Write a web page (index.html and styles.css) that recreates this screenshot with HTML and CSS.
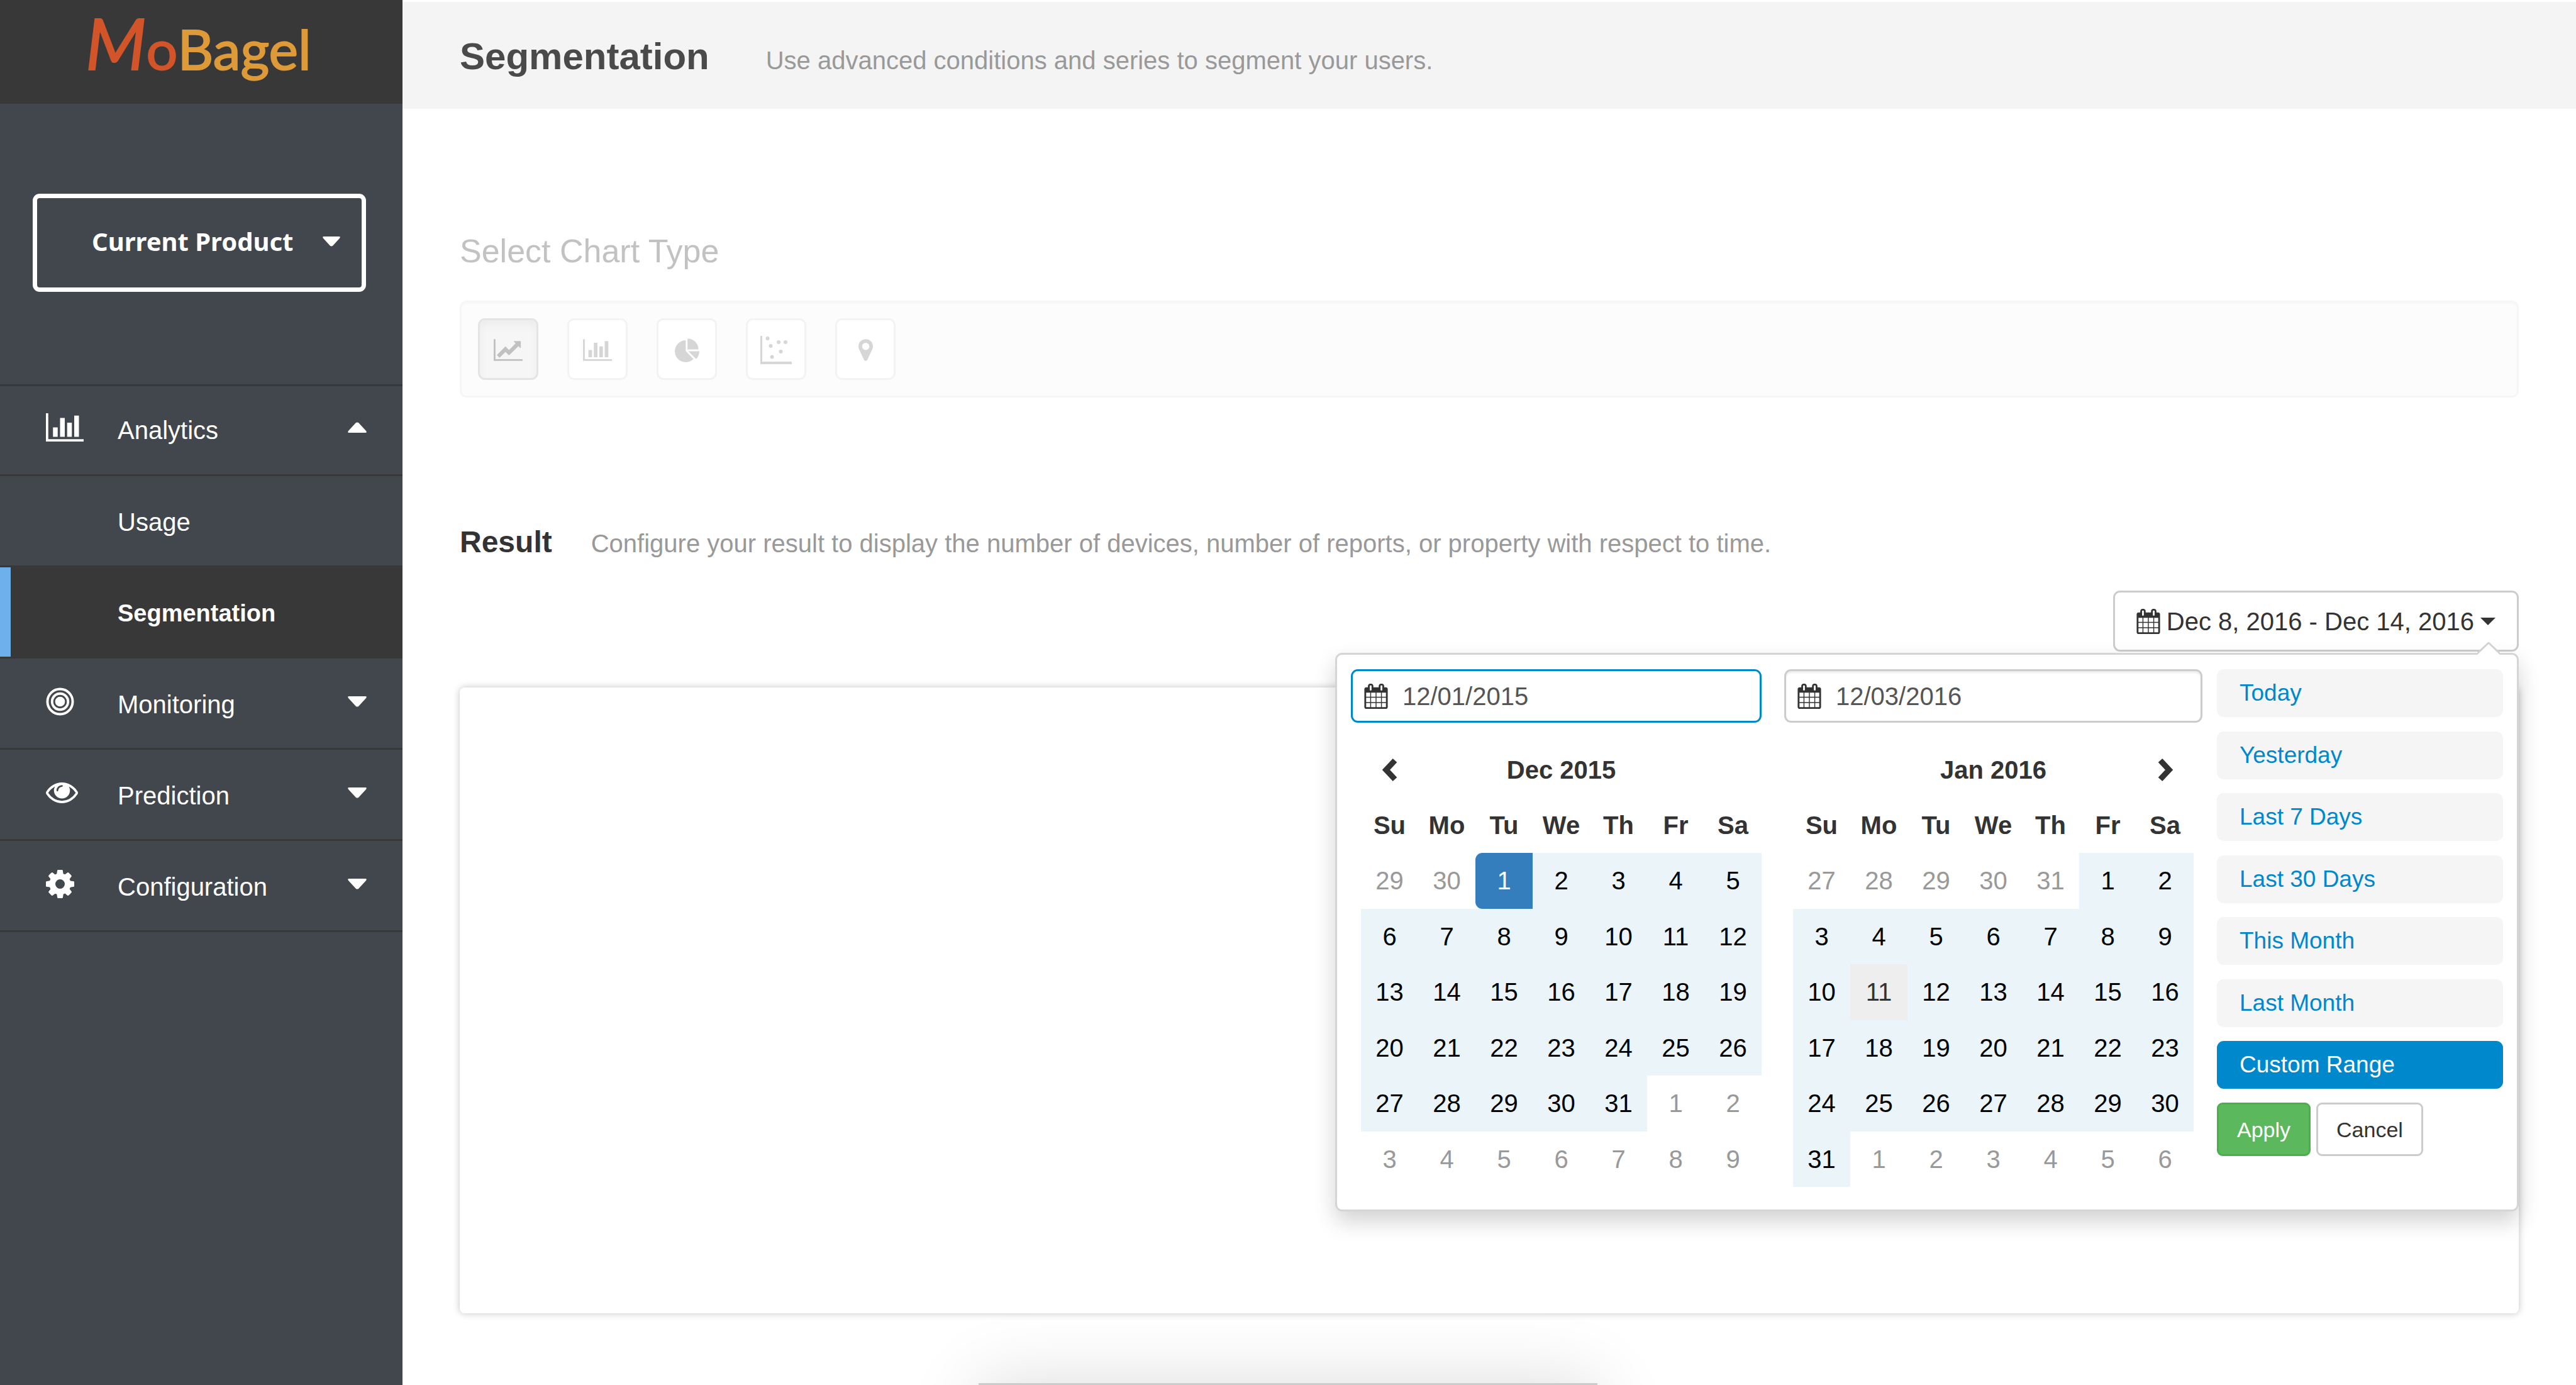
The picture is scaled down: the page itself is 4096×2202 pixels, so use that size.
FILE: index.html
```html
<!DOCTYPE html>
<html lang="en">
<head>
<meta charset="utf-8">
<title>Segmentation - MoBagel</title>
<link rel="stylesheet" href="styles.css">
</head>
<body>
<svg class="sprite" aria-hidden="true">
  <symbol id="i-bars" viewBox="0 128 2048 1536"><path d="M640 896v512h-256v-512h256zm384-512v1024h-256v-1024h256zm1024 1152v128h-2048v-1536h128v1408h1920zm-640-896v768h-256v-768h256zm384-384v1152h-256v-1152h256z"/></symbol>
  <symbol id="i-line" viewBox="0 128 2048 1536"><path d="M2048 1536v128h-2048v-1536h128v1408h1920zm-128-1248v435q0 21-19.5 29.5t-35.500-7.500l-121-121-633 633q-10 10-23 10t-23-10l-233-233-416 416-192-192 585-585q10-10 23-10t23 10l233 233 464-464-121-121q-16-16-7.500-35.500t29.500-19.500h435q14 0 23 9t9 23z"/></symbol>
  <symbol id="i-pie" viewBox="0 0 1728 1664"><path d="M768 890l546 546q-106 108-247.500 168t-298.500 60q-209 0-385.500-103t-279.500-279.500-103-385.500 103-385.500 279.500-279.500 385.500-103v762zm187 6h773q0 157-60 298.500t-168 247.500zm709-128h-768v-768q209 0 385.500 103t279.500 279.500 103 385.500z"/></symbol>
  <symbol id="i-scatter" viewBox="0 0 50 46"><path d="M0 0h3v41h47v4H0z"/><circle cx="11.500" cy="4" r="3"/><circle cx="29" cy="10" r="3"/><circle cx="40" cy="10" r="3"/><circle cx="16.500" cy="16" r="3"/><circle cx="32.500" cy="25" r="3"/><circle cx="18.500" cy="33.500" r="3"/></symbol>
  <symbol id="i-pin" viewBox="384 128 1024 1536"><path d="M1152 640q0-106-75-181t-181-75-181 75-75 181 75 181 181 75 181-75 75-181zm256 0q0 109-33 179l-364 774q-16 33-47.500 52t-67.500 19-67.500-19-46.500-52l-365-774q-33-70-33-179 0-212 150-362t362-150 362 150 150 362z"/></symbol>
  <symbol id="i-target" viewBox="0 0 46 46"><circle cx="23" cy="23" r="8"/><circle cx="23" cy="23" r="13" fill="none" stroke="currentColor" stroke-width="4"/><circle cx="23" cy="23" r="20.500" fill="none" stroke="currentColor" stroke-width="4"/></symbol>
  <symbol id="i-eye" viewBox="0 384 1792 1152"><path d="M1664 960q-152-236-381-353 61 104 61 225 0 185-131.500 316.500t-316.500 131.500-316.500-131.500-131.500-316.500q0-121 61-225-229 117-381 353 133 205 333.500 326.500t434.500 121.500 434.500-121.500 333.500-326.500zm-720-384q0-20-14-34t-34-14q-125 0-214.500 89.500t-89.500 214.500q0 20 14 34t34 14 34-14 14-34q0-86 61-147t147-61q20 0 34-14t14-34zm848 384q0 34-20 69-140 230-376.500 368.500t-499.500 138.500-499.500-139-376.500-368q-20-35-20-69t20-69q140-229 376.500-368t499.500-139 499.500 139 376.500 368q20 35 20 69z"/></symbol>
  <symbol id="i-cog" viewBox="128 128 1536 1536"><path d="M1152 896q0-106-75-181t-181-75-181 75-75 181 75 181 181 75 181-75 75-181zm512-109v222q0 12-8 23t-20 13l-185 28q-19 54-39 91 35 50 107 138 10 12 10 25t-9 23q-27 37-99 108t-94 71q-12 0-26-9l-138-108q-44 23-91 38-16 136-29 186-7 28-36 28h-222q-14 0-24.500-8.500t-11.500-21.500l-28-184q-49-16-90-37l-141 107q-10 9-25 9-14 0-25-11-126-114-165-168-7-10-7-23 0-12 8-23 15-21 51-66.500t54-70.500q-27-50-41-99l-183-27q-13-2-21-12.500t-8-23.500v-222q0-12 8-23t19-13l186-28q14-46 39-92-40-57-107-138-10-12-10-24 0-10 9-23 26-36 98.500-107.500t94.500-71.500q13 0 26 10l138 107q44-23 91-38 16-136 29-186 7-28 36-28h222q14 0 24.500 8.500t11.500 21.500l28 184q49 16 90 37l142-107q9-9 24-9 13 0 25 10 129 119 165 170 7 8 7 22 0 12-8 23-15 21-51 66.500t-54 70.500q26 50 41 98l183 28q13 2 21 12.500t8 23.500z"/></symbol>
  <symbol id="i-calendar" viewBox="64 0 1664 1792"><path d="M192 1664h288v-288h-288v288zm352 0h320v-288h-320v288zm-352-352h288v-320h-288v320zm352 0h320v-320h-320v320zm-352-384h288v-288h-288v288zm736 736h320v-288h-320v288zm-384-736h320v-288h-320v288zm768 736h288v-288h-288v288zm-384-352h320v-320h-320v320zm-352-864v-288q0-13-9.500-22.500t-22.500-9.500h-64q-13 0-22.500 9.500t-9.500 22.500v288q0 13 9.500 22.500t22.500 9.500h64q13 0 22.500-9.500t9.500-22.500zm736 864h288v-320h-288v320zm-384-384h320v-288h-320v288zm384 0h288v-288h-288v288zm32-480v-288q0-13-9.500-22.500t-22.500-9.500h-64q-13 0-22.500 9.500t-9.500 22.500v288q0 13 9.500 22.500t22.500 9.500h64q13 0 22.500-9.500t9.500-22.500zm384-64v1280q0 52-38 90t-90 38h-1408q-52 0-90-38t-38-90v-1280q0-52 38-90t90-38h128v-96q0-66 47-113t113-47h64q66 0 113 47t47 113v96h384v-96q0-66 47-113t113-47h64q66 0 113 47t47 113v96h128q52 0 90 38t38 90z"/></symbol>
  <symbol id="i-down" viewBox="0 0 30 17"><path d="M2 0h26q3 0 1 3L17 16q-2 1-4 0L1 3Q-1 0 2 0z"/></symbol>
  <symbol id="i-up" viewBox="0 0 30 17"><path d="M2 17h26q3 0 1-3L17 1q-2-1-4 0L1 14q-2 3 1 3z"/></symbol>
  <symbol id="i-prev" viewBox="0 0 24 38"><path d="M20 4L6 19l14 15" fill="none" stroke="currentColor" stroke-width="9"/></symbol>
  <symbol id="i-next" viewBox="0 0 24 38"><path d="M4 4l14 15L4 34" fill="none" stroke="currentColor" stroke-width="9"/></symbol>
</svg>

<aside class="sidebar">
  <a class="logo" href="#"><span class="logo-m">M</span><span class="logo-o">o</span>Bagel</a>
  <button class="product" type="button">Current Product<svg class="caret-product"><use href="#i-down"/></svg></button>
  <nav>
    <ul class="menu">
      <li class="menu-item menu-first"><button class="menu-link" type="button"><span class="menu-icon"><svg class="icon-bars"><use href="#i-bars"/></svg></span>Analytics<svg class="caret"><use href="#i-up"/></svg></button></li>
      <li class="menu-item"><a class="menu-link" href="#"><span class="menu-icon"></span>Usage</a></li>
      <li class="menu-item active"><a class="menu-link" href="#" aria-current="page"><span class="menu-icon"></span>Segmentation</a></li>
      <li class="menu-item"><button class="menu-link" type="button"><span class="menu-icon"><svg class="icon-round"><use href="#i-target"/></svg></span>Monitoring<svg class="caret"><use href="#i-down"/></svg></button></li>
      <li class="menu-item"><button class="menu-link" type="button"><span class="menu-icon"><svg class="icon-eye"><use href="#i-eye"/></svg></span>Prediction<svg class="caret"><use href="#i-down"/></svg></button></li>
      <li class="menu-item menu-last"><button class="menu-link" type="button"><span class="menu-icon"><svg class="icon-round"><use href="#i-cog"/></svg></span>Configuration<svg class="caret"><use href="#i-down"/></svg></button></li>
    </ul>
  </nav>
</aside>

<main class="main">
  <header class="page-head">
    <h1>Segmentation</h1>
    <p class="hint">Use advanced conditions and series to segment your users.</p>
  </header>

  <section class="chart-type">
    <h2 class="muted-title">Select Chart Type</h2>
    <div class="well">
      <button class="type-btn selected" type="button" aria-label="Line chart"><svg class="type-wide"><use href="#i-line"/></svg></button>
      <button class="type-btn" type="button" aria-label="Bar chart"><svg class="type-wide"><use href="#i-bars"/></svg></button>
      <button class="type-btn" type="button" aria-label="Pie chart"><svg class="type-pie"><use href="#i-pie"/></svg></button>
      <button class="type-btn" type="button" aria-label="Scatter chart"><svg class="type-scatter"><use href="#i-scatter"/></svg></button>
      <button class="type-btn" type="button" aria-label="Map"><svg class="type-pin"><use href="#i-pin"/></svg></button>
    </div>
  </section>

  <section class="result">
    <div class="result-head">
      <h2>Result</h2>
      <p class="hint">Configure your result to display the number of devices, number of reports, or property with respect to time.</p>
    </div>
    <div class="range">
      <button class="range-btn" type="button"><svg class="cal"><use href="#i-calendar"/></svg>Dec 8, 2016 - Dec 14, 2016<svg class="caret-small" viewBox="0 0 24 12"><path d="M0 0h24L12 12z"/></svg></button>

      <div class="picker">
        <svg class="picker-arrow" viewBox="0 0 36 20"><path d="M0 20L18 2l18 18z" fill="#fff"/><path d="M0 18L18 1l18 17" fill="none" stroke="#d2d2d2" stroke-width="3"/></svg>
        <div class="cal-col">
          <label class="date-field focused"><svg class="cal"><use href="#i-calendar"/></svg><input type="text" value="12/01/2015" aria-label="Start date"></label>
          <table class="month">
            <thead>
              <tr><th><button class="step" type="button" aria-label="Previous month"><svg><use href="#i-prev"/></svg></button></th><th colspan="5">Dec 2015</th><th></th></tr>
              <tr><th>Su</th><th>Mo</th><th>Tu</th><th>We</th><th>Th</th><th>Fr</th><th>Sa</th></tr>
            </thead>
            <tbody>
              <tr><td>29</td><td>30</td><td class="start">1</td><td class="in">2</td><td class="in">3</td><td class="in">4</td><td class="in">5</td></tr>
              <tr><td class="in">6</td><td class="in">7</td><td class="in">8</td><td class="in">9</td><td class="in">10</td><td class="in">11</td><td class="in">12</td></tr>
              <tr><td class="in">13</td><td class="in">14</td><td class="in">15</td><td class="in">16</td><td class="in">17</td><td class="in">18</td><td class="in">19</td></tr>
              <tr><td class="in">20</td><td class="in">21</td><td class="in">22</td><td class="in">23</td><td class="in">24</td><td class="in">25</td><td class="in">26</td></tr>
              <tr><td class="in">27</td><td class="in">28</td><td class="in">29</td><td class="in">30</td><td class="in">31</td><td>1</td><td>2</td></tr>
              <tr><td>3</td><td>4</td><td>5</td><td>6</td><td>7</td><td>8</td><td>9</td></tr>
            </tbody>
          </table>
        </div>
        <div class="cal-col cal-end">
          <label class="date-field"><svg class="cal"><use href="#i-calendar"/></svg><input type="text" value="12/03/2016" aria-label="End date"></label>
          <table class="month">
            <thead>
              <tr><th></th><th colspan="5">Jan 2016</th><th><button class="step" type="button" aria-label="Next month"><svg><use href="#i-next"/></svg></button></th></tr>
              <tr><th>Su</th><th>Mo</th><th>Tu</th><th>We</th><th>Th</th><th>Fr</th><th>Sa</th></tr>
            </thead>
            <tbody>
              <tr><td>27</td><td>28</td><td>29</td><td>30</td><td>31</td><td class="in">1</td><td class="in">2</td></tr>
              <tr><td class="in">3</td><td class="in">4</td><td class="in">5</td><td class="in">6</td><td class="in">7</td><td class="in">8</td><td class="in">9</td></tr>
              <tr><td class="in">10</td><td class="hover">11</td><td class="in">12</td><td class="in">13</td><td class="in">14</td><td class="in">15</td><td class="in">16</td></tr>
              <tr><td class="in">17</td><td class="in">18</td><td class="in">19</td><td class="in">20</td><td class="in">21</td><td class="in">22</td><td class="in">23</td></tr>
              <tr><td class="in">24</td><td class="in">25</td><td class="in">26</td><td class="in">27</td><td class="in">28</td><td class="in">29</td><td class="in">30</td></tr>
              <tr><td class="in">31</td><td>1</td><td>2</td><td>3</td><td>4</td><td>5</td><td>6</td></tr>
            </tbody>
          </table>
        </div>
        <div class="presets">
          <ul>
            <li><button class="preset" type="button">Today</button></li>
            <li><button class="preset" type="button">Yesterday</button></li>
            <li><button class="preset" type="button">Last 7 Days</button></li>
            <li><button class="preset" type="button">Last 30 Days</button></li>
            <li><button class="preset" type="button">This Month</button></li>
            <li><button class="preset" type="button">Last Month</button></li>
            <li><button class="preset chosen" type="button">Custom Range</button></li>
          </ul>
          <div class="actions">
            <button class="btn apply" type="button">Apply</button>
            <button class="btn" type="button">Cancel</button>
          </div>
        </div>
      </div>
    </div>
    <div class="chart-card"></div>
  </section>
</main>
<div class="drawer" aria-hidden="true"></div>
</body>
</html>
```
FILE: styles.css
```css
*, *::before, *::after { box-sizing: border-box; }

body {
  margin: 0;
  display: grid;
  grid-template-columns: 640px 1fr;
  min-height: 100vh;
  background: #fff;
  color: #333;
  font: 40px/60px "Liberation Sans", Arial, sans-serif;
}

h1, h2, p, ul { margin: 0; padding: 0; }
ul { list-style: none; }
button, input { font: inherit; color: inherit; margin: 0; }
button { cursor: pointer; }
svg { display: block; flex: none; fill: currentColor; }
.sprite { position: absolute; width: 0; height: 0; }

/* Sidebar */
.sidebar { background: #42464d; color: #fff; }

.logo {
  display: flex;
  align-items: baseline;
  height: 165px;
  padding: 18px 0 0 136px;
  background: #393838;
  color: #de9a38;
  font: 400 88px/100px Lato, sans-serif;
  text-decoration: none;
  -webkit-text-stroke: 2px currentColor;
}
.logo-m { color: #d2552a; font-size: 112px; font-style: italic; }
.logo-o { color: #d2552a; }

.product {
  display: flex;
  align-items: center;
  justify-content: space-between;
  width: 530px;
  height: 156px;
  margin: 143px 0 147px 52px;
  padding: 0 34px 4px 87px;
  border: 7px solid #fff;
  border-radius: 11px;
  background: none;
  font: 700 40px/60px "Noto Sans", sans-serif;
}
.caret-product { width: 28px; height: 16px; }

.menu-item { border-top: 3px solid #393838; }
.menu-last { border-bottom: 3px solid #393838; }
.menu-link {
  display: flex;
  align-items: center;
  width: 100%;
  height: 142px;
  padding: 3px 57px 0 73px;
  border: 0;
  background: none;
  color: #fff;
  text-align: left;
  text-decoration: none;
}
.menu-first .menu-link { height: 140px; padding-top: 0; }
.menu-icon { width: 114px; padding-bottom: 9px; }
.icon-bars { width: 60px; height: 45px; }
.icon-round { width: 45px; height: 45px; }
.icon-eye { width: 51px; height: 33px; }
.caret { width: 30px; height: 17px; margin: 0 0 9px auto; }
.active { background: #393838; }
.active .menu-link {
  padding-left: 56px;
  border-left: 17px solid #6db0ec;
  font-weight: 700;
  font-size: 38px;
}

/* Page head */
.page-head {
  display: flex;
  align-items: baseline;
  gap: 90px;
  height: 173px;
  padding: 57px 91px 0;
  border-top: 3px solid #fff;
  background: #f4f4f4;
}
h1 { color: #4a4a4a; font-size: 60px; line-height: 60px; }
.hint { color: #999; }

/* Chart type */
.chart-type { padding: 196px 91px 0; }
.muted-title { color: #c2c2c2; font-size: 52px; font-weight: 400; }
.well {
  display: flex;
  gap: 46px;
  margin-top: 49px;
  padding: 25px 26px;
  border: 3px solid #f6f6f6;
  border-radius: 11px;
  background: #fcfcfc;
  box-shadow: inset 0 3px 3px rgba(0, 0, 0, .015);
}
.type-btn {
  display: grid;
  place-items: center;
  width: 96px;
  height: 98px;
  padding: 3px 0 0;
  border: 3px solid #f3f3f3;
  border-radius: 11px;
  background: #fff;
  color: #d6d6d6;
}
.type-btn.selected {
  border-color: #e4e4e4;
  background: #f6f6f6;
  color: #c1c1c1;
  box-shadow: inset 0 8px 14px rgba(0, 0, 0, .04);
}
.type-wide { width: 46px; height: 35px; }
.type-pie { width: 39px; height: 38px; }
.type-scatter { width: 50px; height: 46px; }
.type-pin { width: 23px; height: 35px; }

/* Result */
.result { padding: 200px 91px 114px; }
.result-head { display: flex; align-items: baseline; gap: 62px; }
.result-head h2 { font-size: 48px; }
.range {
  position: relative;
  display: flex;
  justify-content: flex-end;
  margin-top: 45px;
}
.range-btn {
  display: flex;
  align-items: center;
  height: 97px;
  padding: 0 34px;
  border: 3px solid #ccc;
  border-radius: 11px;
  background: #fff;
}
.cal { width: 38px; height: 40px; }
.range-btn .cal { margin-right: 10px; }
.caret-small { width: 24px; height: 12px; margin-left: 10px; }
.chart-card {
  height: 995px;
  margin-top: 57px;
  border-radius: 8px;
  background: #fff;
  box-shadow: 0 0 12px rgba(0, 0, 0, .24);
}

/* Date picker */
.picker {
  position: absolute;
  z-index: 2;
  top: 99px;
  right: 0;
  display: flex;
  width: 1882px;
  padding: 23px 22px 36px;
  border: 3px solid #d5d5d5;
  border-radius: 11px;
  background: #fff;
  box-shadow: 0 16px 34px rgba(0, 0, 0, .175);
}
.picker-arrow { position: absolute; top: -20px; right: 27px; width: 36px; height: 20px; }
.cal-col { width: 653px; }
.cal-end { width: 665px; margin: 0 23px 0 36px; }
.date-field {
  display: flex;
  align-items: center;
  gap: 23px;
  height: 85px;
  padding: 0 18px;
  border: 3px solid #ccc;
  border-radius: 11px;
  box-shadow: inset 0 3px 3px rgba(0, 0, 0, .075);
}
.date-field.focused { border-color: #08c; box-shadow: none; }
.date-field input {
  flex: 1;
  min-width: 0;
  padding: 0;
  border: 0;
  outline: 0;
  background: none;
  color: #555;
}
.month {
  width: 637px;
  height: 707px;
  margin: 31px 0 0 16px;
  border-spacing: 0;
  table-layout: fixed;
}
.cal-end .month { margin-left: 14px; }
.month tr { height: 88px; }
.month th, .month td { padding: 0; text-align: center; }
.month td { color: #999; }
.month .in { background: #ebf4f8; color: #000; }
.month .start { border-radius: 11px 0 0 11px; background: #357ebd; color: #fff; }
.month .hover { background: #eee; color: #333; }
.step { display: block; margin: 0 auto; padding: 0; border: 0; background: none; }
.step svg { width: 24px; height: 38px; }

.presets { flex: 1; font-size: 37px; }
.presets ul {
  display: flex;
  flex-direction: column;
  justify-content: space-between;
  height: 667px;
}
.preset {
  display: block;
  width: 100%;
  height: 76px;
  padding: 0 36px;
  border: 0;
  border-radius: 11px;
  background: #f5f5f5;
  color: #08c;
  text-align: left;
}
.preset.chosen { background: #08c; color: #fff; }
.actions { display: flex; gap: 9px; margin-top: 22px; }
.btn {
  height: 85px;
  padding: 0 29px;
  border: 3px solid #ccc;
  border-radius: 9px;
  background: #fff;
  font-size: 34px;
}
.apply { border-color: #4cae4c; background: #5cb85c; color: #fff; }

/* Drawer peeking over the bottom edge */
.drawer {
  position: fixed;
  bottom: -397px;
  left: 38%;
  width: 24%;
  height: 400px;
  background: #ccc;
  box-shadow: 0 0 110px rgba(0, 0, 0, .14);
}
```
